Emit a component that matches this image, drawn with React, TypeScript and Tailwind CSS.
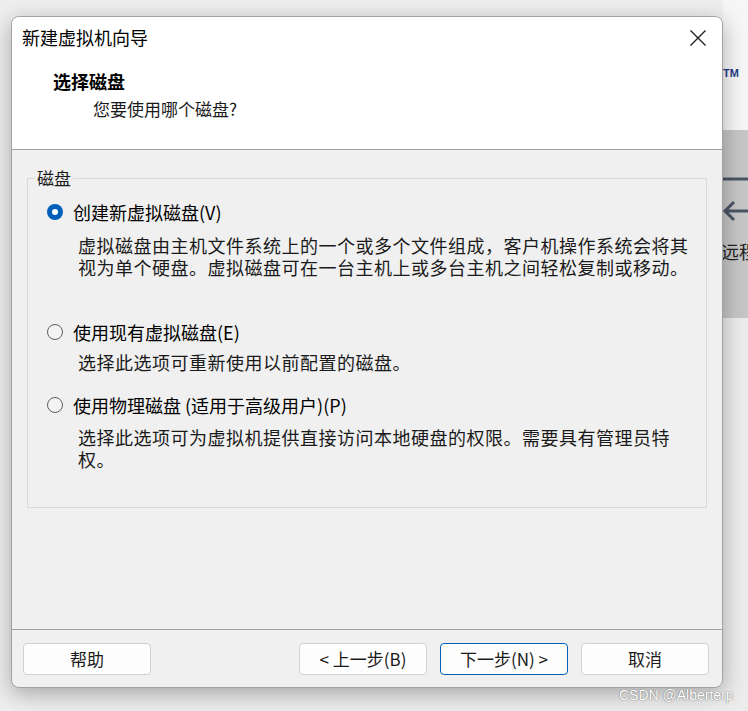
import React from 'react'

const cjk = "font-['Noto_Sans_CJK_SC','Noto_Sans',sans-serif]"

function Radio({ checked }: { checked?: boolean }) {
  if (checked) {
    return (
      <span className="flex h-4 w-4 shrink-0 items-center justify-center rounded-full bg-[#005fb8]">
        <span className="h-[6px] w-[6px] rounded-full bg-white" />
      </span>
    )
  }
  return <span className="h-4 w-4 shrink-0 rounded-full border border-[#5f5f5f] bg-[#f3f3f3]" />
}

function Button({ label, primary }: { label: string; primary?: boolean }) {
  return (
    <button
      className={
        primary
          ? 'h-8 w-32 rounded-[4px] border border-[#005fb8] bg-[#fdfdfd] text-[17px] text-[#1a1a1a]'
          : 'h-8 w-32 rounded-[4px] border border-[#d1d1d1] bg-[#fdfdfd] text-[17px] text-[#1a1a1a]'
      }
    >
      {label}
    </button>
  )
}

export default function App() {
  return (
    <div className={`relative flex h-[711px] w-[748px] overflow-hidden bg-[#eeeeee] ${cjk}`}>
      {/* dialog */}
      <div className="relative z-10 pl-[11px] pt-[16px]">
        <div className="flex h-[672px] w-[712px] flex-col overflow-hidden rounded-[8px] border border-[#a3a3a3] bg-[#f0f0f0] shadow-[0_6px_22px_rgba(0,0,0,0.3)]">
          {/* header */}
          <div className="h-[133px] shrink-0 border-b border-[#a0a0a0] bg-white">
            <div className="flex items-center justify-between pl-[10px] pr-[16px] pt-[8px]">
              <span className="text-[18px] leading-[24px] text-black">新建虚拟机向导</span>
              <svg width="16" height="16" viewBox="0 0 16 16" className="mt-[2px] text-[#1a1a1a]">
                <path d="M0.5 0.5 L15.5 15.5 M15.5 0.5 L0.5 15.5" stroke="currentColor" strokeWidth="1.3" fill="none" />
              </svg>
            </div>
            <div className="mt-[20px] pl-[41px] text-[18px] font-bold leading-[24px] text-black">选择磁盘</div>
            <div className="mt-[4px] pl-[81px] text-[17px] leading-[24px] text-[#1a1a1a]">您要使用哪个磁盘?</div>
          </div>

          {/* body */}
          <div className="flex-1 px-[15px] pt-[18px]">
            <fieldset className="border border-[#dadada] pb-[37px]">
              <legend className="ml-[7px] px-[2px] text-[17px] leading-[20px] text-[#1a1a1a]">磁盘</legend>

              <div className="mt-[12px] flex h-6 items-center gap-[10px] pl-[19px]">
                <Radio checked />
                <span className="text-[18px] text-black">创建新虚拟磁盘(V)</span>
              </div>
              <p className="mt-[10px] pl-[50px] text-[18px] leading-[22px] tracking-[0.5px] text-[#1a1a1a]">
                虚拟磁盘由主机文件系统上的一个或多个文件组成，客户机操作系统会将其
                <br />
                视为单个硬盘。虚拟磁盘可在一台主机上或多台主机之间轻松复制或移动。
              </p>

              <div className="mt-[42px] flex h-6 items-center gap-[10px] pl-[19px]">
                <Radio />
                <span className="text-[18px] text-black">使用现有虚拟磁盘(E)</span>
              </div>
              <p className="mt-[7px] pl-[50px] text-[18px] leading-[22px] tracking-[0.5px] text-[#1a1a1a]">
                选择此选项可重新使用以前配置的磁盘。
              </p>

              <div className="mt-[20px] flex h-6 items-center gap-[10px] pl-[19px]">
                <Radio />
                <span className="text-[18px] text-black">使用物理磁盘 (适用于高级用户)(P)</span>
              </div>
              <p className="mt-[9px] pl-[50px] text-[18px] leading-[22px] tracking-[0.5px] text-[#1a1a1a]">
                选择此选项可为虚拟机提供直接访问本地硬盘的权限。需要具有管理员特
                <br />
                权。
              </p>
            </fieldset>
          </div>

          {/* footer */}
          <div className="flex h-[58px] shrink-0 items-start justify-between border-t border-[#a0a0a0] pl-[11px] pr-[13px] pt-[13px]">
            <Button label="帮助" />
            <div className="flex gap-[13px]">
              <Button label="< 上一步(B)" />
              <Button label="下一步(N) >" primary />
              <Button label="取消" />
            </div>
          </div>
        </div>
      </div>

      {/* background app strip */}
      <div className="flex flex-1 flex-col">
        <div className="h-[130px] bg-[#f6f6f6] pt-[66px]">
          <span className="block text-[11px] font-bold leading-[14px] text-[#1f3c88] font-['Liberation_Sans',sans-serif]">TM</span>
        </div>
        <div className="h-[188px] bg-[#c6c6c6] pt-[47px]">
          <svg width="28" height="46" viewBox="0 0 28 46" className="-ml-[3px] text-[#4a5664]">
            <path d="M0 2 L28 2" stroke="currentColor" strokeWidth="3" fill="none" />
            <path d="M14 25 L5 34 L14 43 M5 34 L28 34" stroke="currentColor" strokeWidth="3" fill="none" />
          </svg>
          <div className="mt-[16px] -ml-[2px] whitespace-nowrap text-[18px] leading-[24px] text-[#222]">远程</div>
        </div>
        <div className="flex-1 bg-[#ececec]" />
      </div>

      <span className="absolute left-[619px] top-[685px] z-20 text-[14px] text-white font-['Liberation_Sans',sans-serif] [text-shadow:0_0_1px_#777,0_0_1px_#777]">
        CSDN @Alberterp
      </span>
    </div>
  )
}
